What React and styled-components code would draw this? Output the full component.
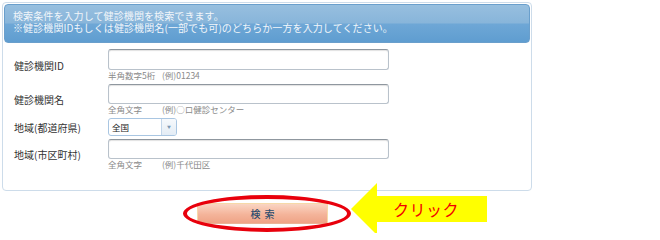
import React from 'react'
import styled, { createGlobalStyle } from 'styled-components'

const GlobalStyle = createGlobalStyle`
  html, body {
    margin: 0;
    padding: 0;
    background: #fff;
    overflow: hidden;
  }
  body {
    font-family: "Noto Sans CJK JP", "Noto Sans", sans-serif;
  }
`

const Page = styled.div`
  padding: 2px 0 0 2px;
  width: 660px;
  height: 233px;
  box-sizing: border-box;
`

const Panel = styled.div`
  width: 530px;
  box-sizing: border-box;
  border: 1px solid #cddcea;
  border-radius: 4px;
  padding: 1px 1px 20px;
`

const Header = styled.div`
  height: 39px;
  box-sizing: border-box;
  border: 1px solid #6a9fcc;
  border-radius: 4px;
  background: linear-gradient(
    to bottom,
    #97bfdf 0%,
    #88b5da 48%,
    #6ea7d6 52%,
    #5f9dd0 100%
  );
  padding: 5px 0 0 8px;
  color: #f2f6fa;
  font-size: 10px;
  line-height: 12px;
  letter-spacing: 0.1px;
`

const Form = styled.div`
  display: grid;
  grid-template-columns: 104px 1fr;
  row-gap: 3px;
  align-items: center;
  margin-top: 6px;
`

const Label = styled.div`
  padding-left: 10px;
  font-size: 10px;
  color: #333;
`

const Field = styled.div`
  display: flex;
  flex-direction: column;
`

const TextInput = styled.div`
  width: 281px;
  height: ${({ $h }) => $h}px;
  box-sizing: border-box;
  border: 1px solid #b9c2cb;
  border-top-color: #8f979f;
  border-radius: 3px;
  background: #fff;
  box-shadow: inset 0 1px 1px rgba(0, 0, 0, 0.12);
`

const Hint = styled.div`
  display: flex;
  height: 11px;
  font-size: 8.5px;
  line-height: 11px;
  color: #8a8a8a;
`

const HintKind = styled.span`
  width: 54px;
`

const Select = styled.div`
  display: flex;
  width: 69px;
  height: 18px;
  box-sizing: border-box;
  border: 1px solid #a9c6e2;
  border-radius: 3px;
  overflow: hidden;
  background: #fff;
`

const SelectValue = styled.span`
  flex: 1;
  padding-left: 3px;
  font-size: 8.5px;
  line-height: 16px;
  color: #222;
`

const SelectArrow = styled.span`
  width: 14px;
  border-left: 1px solid #c2d6ea;
  background: linear-gradient(to bottom, #f6f9fc, #e3ecf5);
  display: flex;
  align-items: center;
  justify-content: center;
  font-size: 4px;
  color: #7d99b5;
`

const ActionArea = styled.div`
  position: relative;
  padding: 8px 0 0 195px;
`

const ButtonWrap = styled.div`
  position: relative;
  display: inline-block;
`

const SearchButton = styled.button`
  display: block;
  width: 131px;
  height: 21px;
  margin: 0;
  padding: 0;
  border: 1px solid #f6d9a8;
  border-bottom-color: #eab597;
  background: linear-gradient(to bottom, #fad5c3 0%, #f4b49a 55%, #efa386 100%);
  font-family: "Noto Sans CJK JP", sans-serif;
  font-size: 10px;
  font-weight: 500;
  letter-spacing: 4px;
  text-indent: 4px;
  color: #2d4d6e;
`

const Ring = styled.span`
  position: absolute;
  left: -14px;
  top: -8px;
  width: 168px;
  height: 37px;
  box-sizing: border-box;
  border: 4px solid #e8000c;
  border-radius: 50%;
  pointer-events: none;
`

const Callout = styled.div`
  position: absolute;
  left: 349px;
  top: -8px;
  width: 136px;
  height: 52px;
`

const CalloutText = styled.span`
  position: absolute;
  left: 42px;
  top: 15px;
  font-size: 16px;
  line-height: 22px;
  color: #f20000;
  letter-spacing: 0.5px;
`

function Arrow() {
  return (
    <svg width="136" height="52" viewBox="0 0 136 52">
      <polygon points="0,26 26,0 26,13 136,13 136,39 26,39 26,52" fill="#ffff00" />
    </svg>
  )
}

const rows = [
  { label: '健診機関ID', h: 21, kind: '半角数字5桁', example: '(例)01234' },
  { label: '健診機関名', h: 20, kind: '全角文字', example: '(例)○ロ健診センター' },
  { label: '地域(都道府県)', select: '全国' },
  { label: '地域(市区町村)', h: 20, kind: '全角文字', example: '(例)千代田区' },
]

export default function App() {
  return (
    <Page>
      <GlobalStyle />
      <Panel>
        <Header>
          検索条件を入力して健診機関を検索できます。
          <br />
          ※健診機関IDもしくは健診機関名(一部でも可)のどちらか一方を入力してください。
        </Header>
        <Form>
          {rows.map((row) => (
            <React.Fragment key={row.label}>
              <Label>{row.label}</Label>
              <Field>
                {row.select ? (
                  <Select>
                    <SelectValue>{row.select}</SelectValue>
                    <SelectArrow>▼</SelectArrow>
                  </Select>
                ) : (
                  <>
                    <TextInput $h={row.h} />
                    <Hint>
                      <HintKind>{row.kind}</HintKind>
                      <span>{row.example}</span>
                    </Hint>
                  </>
                )}
              </Field>
            </React.Fragment>
          ))}
        </Form>
      </Panel>
      <ActionArea>
        <ButtonWrap>
          <SearchButton>検索</SearchButton>
          <Ring />
        </ButtonWrap>
        <Callout>
          <Arrow />
          <CalloutText>クリック</CalloutText>
        </Callout>
      </ActionArea>
    </Page>
  )
}
